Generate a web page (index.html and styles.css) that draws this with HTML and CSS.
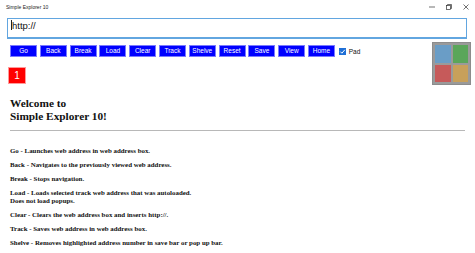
FILE: index.html
```html
<!DOCTYPE html>
<html lang="en">
<head>
  <meta charset="UTF-8" />
  <title>Simple Explorer 10</title>
  <link rel="stylesheet" href="styles.css">
</head>
<body>

  <div class="titlebar">
    <div class="app-title">Simple Explorer 10</div>
    <div class="window-controls">
      <svg width="6" height="6" viewBox="0 0 6 6"><line x1="0" y1="3" x2="6" y2="3" stroke="#333" stroke-width="0.7"/></svg>
      <svg width="6" height="6" viewBox="0 0 6 6"><rect x="0.5" y="1.5" width="4" height="4" fill="none" stroke="#333" stroke-width="0.7"/><polyline points="1.5,1.5 1.5,0.5 5.5,0.5 5.5,4.5 4.5,4.5" fill="none" stroke="#333" stroke-width="0.7"/></svg>
      <svg width="6" height="6" viewBox="0 0 6 6"><path d="M0.5 0.5 L5.5 5.5 M5.5 0.5 L0.5 5.5" stroke="#333" stroke-width="0.7"/></svg>
    </div>
  </div>

  <div class="address-box">
    <span class="caret"></span>http://
  </div>

  <div class="toolbar">
    <div class="toolbar-left">
      <div class="button-row">
        <button class="nav-btn">Go</button>
        <button class="nav-btn">Back</button>
        <button class="nav-btn">Break</button>
        <button class="nav-btn">Load</button>
        <button class="nav-btn">Clear</button>
        <button class="nav-btn">Track</button>
        <button class="nav-btn">Shelve</button>
        <button class="nav-btn">Reset</button>
        <button class="nav-btn">Save</button>
        <button class="nav-btn">View</button>
        <button class="nav-btn">Home</button>
        <label class="pad-check">
          <span class="checkbox">
            <svg width="7" height="7" viewBox="0 0 7 7"><polyline points="1.3,3.6 2.9,5.2 5.8,1.8" fill="none" stroke="white" stroke-width="1"/></svg>
          </span>
          Pad
        </label>
      </div>
      <div class="count-box">1</div>
    </div>

    <div class="tile-logo">
      <div class="tile blue"></div>
      <div class="tile green"></div>
      <div class="tile red"></div>
      <div class="tile gold"></div>
    </div>
  </div>

  <div class="content">
    <h1>Welcome to<br>Simple Explorer 10!</h1>
    <hr>
    <p>Go - Launches web address in web address box.</p>
    <p>Back - Navigates to the previously viewed web address.</p>
    <p>Break - Stops navigation.</p>
    <p>Load - Loads selected track web address that was autoloaded.<br>Does not load popups.</p>
    <p>Clear - Clears the web address box and inserts http://.</p>
    <p>Track - Saves web address in web address box.</p>
    <p>Shelve - Removes highlighted address number in save bar or pop up bar.</p>
  </div>

</body>
</html>
```

FILE: styles.css
```css
* {
  margin: 0;
  padding: 0;
  box-sizing: border-box;
}

body {
  background-color: white;
  font-family: 'Liberation Sans', Arial, sans-serif;
  width: 475px;
  height: 253px;
  overflow: hidden;
}

.titlebar {
  height: 14px;
  display: flex;
  justify-content: space-between;
  align-items: center;
  padding: 0 6px;
}

.app-title {
  font-size: 5px;
  color: #222;
}

.window-controls {
  display: flex;
  gap: 11px;
}

.address-box {
  margin: 4px 8px 0 7px;
  height: 21px;
  border: 1px solid #62a6e0;
  border-bottom: 2px solid #62a6e0;
  padding: 1px 3px;
  font-size: 9.5px;
  line-height: 11px;
  color: #111;
  display: flex;
  align-items: flex-start;
}

.caret {
  display: inline-block;
  width: 1px;
  height: 10px;
  background-color: #222;
}

.toolbar {
  display: flex;
  margin-top: 3px;
}

.toolbar-left {
  flex: 1;
  padding-left: 8px;
}

.button-row {
  display: flex;
  align-items: center;
  gap: 2.8px;
  margin-top: 3px;
  margin-left: 2px;
}

.nav-btn {
  width: 27px;
  height: 12px;
  background-color: #0000ff;
  color: white;
  border: 1px solid #7a7aff;
  font-family: 'Liberation Sans', Arial, sans-serif;
  font-size: 6.5px;
  line-height: 10px;
}

.pad-check {
  display: flex;
  align-items: center;
  gap: 3px;
  font-size: 6.5px;
  color: #111;
  margin-left: 1px;
}

.checkbox {
  width: 7px;
  height: 7px;
  background-color: #1f6fd6;
  display: flex;
}

.count-box {
  width: 18px;
  height: 17px;
  margin-top: 10px;
  background-color: #ff0000;
  border: 1px solid #ff9a9a;
  color: white;
  font-size: 10px;
  display: flex;
  align-items: center;
  justify-content: center;
}

.tile-logo {
  width: 39px;
  height: 43px;
  margin-right: 4px;
  background-color: #9a9a9a;
  border: 1px solid #8c8c8c;
  padding: 2px;
  display: grid;
  grid-template-columns: 1fr 1fr;
  grid-template-rows: 1fr 1fr;
  gap: 2px;
}

.tile.blue { background-color: #6a9dc6; }
.tile.green { background-color: #5aa65a; }
.tile.red { background-color: #c65a5a; }
.tile.gold { background-color: #c8a05a; }

.content {
  padding: 0 10px;
  font-family: 'Liberation Serif', 'Times New Roman', serif;
  color: #111;
}

.content h1 {
  margin-top: 12px;
  font-size: 11.3px;
  line-height: 13px;
  font-weight: bold;
}

.content hr {
  border: none;
  border-top: 1px solid #b8b8b8;
  margin: 7px 0 16px 0;
}

.content p {
  font-size: 6.9px;
  line-height: 8px;
  font-weight: bold;
  margin-bottom: 6px;
}
```
